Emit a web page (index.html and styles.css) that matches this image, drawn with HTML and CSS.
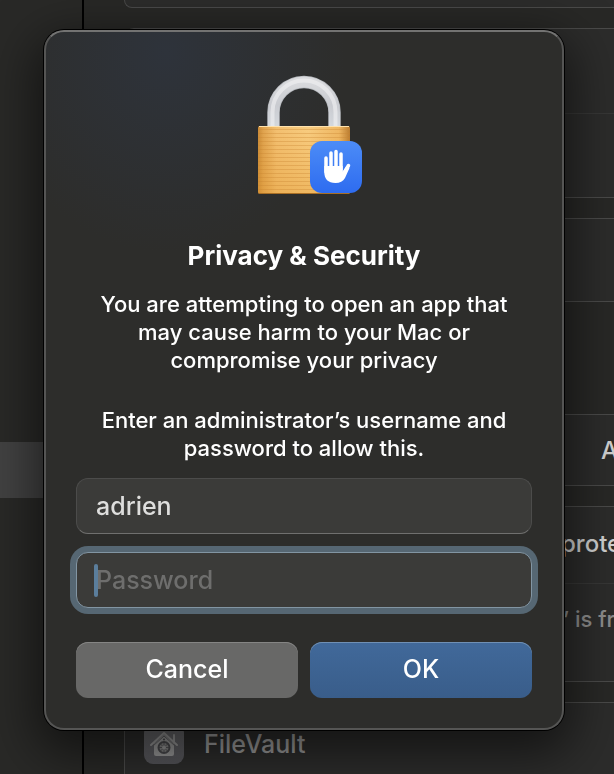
FILE: index.html
```html
<!DOCTYPE html>
<html lang="en">
    <head>
        <meta charset="UTF-8">
        <meta name="viewport" content="width=device-width, initial-scale=1">
        <title>Privacy &amp; Security</title>
        <link rel="stylesheet" href="styles.css">
    </head>
    <body>
        <div class="window">
            <nav class="sidebar">
                <div class="selected"></div>
            </nav>
            <main class="settings">
                <section class="group group-first"></section>
                <section class="group">
                    <div class="row"></div>
                    <div class="row"></div>
                </section>
                <section class="group">
                    <div class="row row-single"></div>
                </section>
                <section class="group group-allow">
                    <div class="row row-short"><span class="value-end">A</span></div>
                </section>
                <section class="group">
                    <div class="row row-medium"><span class="value">prote</span></div>
                    <div class="row row-tall"><span class="note">’ is fr</span></div>
                </section>
                <section class="group group-last">
                    <div class="row row-vault">
                        <svg class="vault-icon" viewBox="0 0 40 40" aria-hidden="true">
                            <defs>
                                <linearGradient id="vault" x1="0" y1="0" x2="0" y2="1">
                                    <stop offset="0" stop-color="#6b6b6d"/>
                                    <stop offset="1" stop-color="#535358"/>
                                </linearGradient>
                            </defs>
                            <rect width="40" height="40" rx="9" fill="url(#vault)"/>
                            <path d="M10 20v10q0 2 2 2h16q2 0 2-2V20L20 11z" fill="#969696"/>
                            <path d="M7 21L20 9l13 12M30 11v7" fill="none" stroke="#969696" stroke-width="2" stroke-linecap="round" stroke-linejoin="round"/>
                            <path d="M9 22L20 12l11 10" fill="none" stroke="#5b5b5d" stroke-width="1"/>
                            <circle cx="20" cy="23.500" r="5.500" fill="#808080" stroke="#48484b" stroke-width="2"/>
                            <path d="M20 18v11M14.500 23.500h11M16 19.500l8 8M24 19.500l-8 8" stroke="#48484b" stroke-width="0.800"/>
                            <circle cx="20" cy="23.500" r="2" fill="#969696"/>
                            <circle cx="20" cy="15.500" r="1" fill="#48484b"/>
                        </svg>
                        <span>FileVault</span>
                    </div>
                </section>
            </main>
        </div>

        <div class="overlay">
            <form class="dialog" role="dialog" aria-labelledby="title">
                <svg class="lock" viewBox="-12 0 124 126" aria-hidden="true">
                    <defs>
                        <linearGradient id="steel" x1="0" y1="0" x2="0" y2="1">
                            <stop offset="0" stop-color="#d9dadd"/>
                            <stop offset="0.5" stop-color="#c9cbd0"/>
                            <stop offset="1" stop-color="#d5d9de"/>
                        </linearGradient>
                        <linearGradient id="brass" x1="0" y1="0" x2="1" y2="0">
                            <stop offset="0" stop-color="#c98a37"/>
                            <stop offset="0.06" stop-color="#e0a450"/>
                            <stop offset="0.2" stop-color="#f3c071"/>
                            <stop offset="0.55" stop-color="#f8cc80"/>
                            <stop offset="0.88" stop-color="#efb864"/>
                            <stop offset="1" stop-color="#b97b30"/>
                        </linearGradient>
                        <linearGradient id="shade" x1="0" y1="0" x2="0" y2="1">
                            <stop offset="0" stop-color="#e29a32" stop-opacity="0"/>
                            <stop offset="1" stop-color="#e29a32" stop-opacity="0.4"/>
                        </linearGradient>
                        <linearGradient id="badge" x1="0" y1="0" x2="0" y2="1">
                            <stop offset="0" stop-color="#4c8cf7"/>
                            <stop offset="1" stop-color="#2e6cf0"/>
                        </linearGradient>
                        <pattern id="brushed" width="92" height="4" patternUnits="userSpaceOnUse">
                            <rect y="1" width="92" height="1" fill="#c98430" opacity="0.35"/>
                        </pattern>
                    </defs>
                    <!-- shackle -->
                    <path d="M19.500 56V40.500a30.500 30.500 0 0 1 61 0V56" fill="none" stroke="#b4b7bc" stroke-width="12.500"/>
                    <path d="M19.500 56V40.500a30.500 30.500 0 0 1 61 0V56" fill="none" stroke="url(#steel)" stroke-width="11"/>
                    <path d="M18.500 54V40a31.500 31.500 0 0 1 63 0V54" fill="none" stroke="#f1f2f4" stroke-width="4" opacity="0.6"/>
                    <!-- body -->
                    <rect x="4" y="54" width="92" height="68" rx="2" fill="url(#brass)"/>
                    <rect x="4" y="54" width="92" height="68" rx="2" fill="url(#shade)"/>
                    <rect x="4" y="57" width="92" height="62" fill="url(#brushed)"/>
                    <path d="M5 54.500h90" stroke="#ffe2ad" stroke-width="1"/>
                    <path d="M5 121.500h90" stroke="#a96f25" stroke-width="1"/>
                    <!-- hand badge -->
                    <rect x="56" y="69" width="52" height="52" rx="12" fill="url(#badge)"/>
                    <g fill="none" stroke="#fff" stroke-linecap="round">
                        <path d="M72 86v14M77 81v16M82 79.500v17M87 82v16" stroke-width="3.500"/>
                        <path d="M94.500 93.500L89 103" stroke-width="3.500"/>
                    </g>
                    <path d="M70.300 94H88.700V99.500L92 94.500l3.500 1.500C94 99 92.500 103 91 106c-2 3.500-5 5-9.500 5C74 111 70.300 107 70.300 100z" fill="#fff"/>
                </svg>
                <h1 id="title">Privacy &amp; Security</h1>
                <p>You are attempting to open an app that may cause harm to your Mac or compromise your privacy</p>
                <p class="prompt">Enter an administrator’s username and password to allow this.</p>
                <input class="field" type="text" name="username" value="adrien" aria-label="Username">
                <div class="password">
                    <input class="field field-active" type="password" name="password" placeholder="Password" aria-label="Password">
                    <span class="caret"></span>
                </div>
                <div class="buttons">
                    <button class="btn" type="button">Cancel</button>
                    <button class="btn btn-primary" type="submit">OK</button>
                </div>
            </form>
        </div>
    </body>
</html>
```

FILE: styles.css
```css
* {
    box-sizing: border-box;
}

body {
    margin: 0;
    height: 100vh;
    overflow: hidden;
    background: #282826;
    color: #fff;
    font-family: Inter, "Liberation Sans", sans-serif;
    font-size: 22px;
    font-weight: 500;
}

/* settings window behind the dialog */
.window {
    display: flex;
    height: 100%;
    overflow: hidden;
}

.sidebar {
    flex: 0 0 84px;
    padding-top: 442px;
    border-right: 2px solid #000;
    background: #292927;
}

.selected {
    height: 56px;
    background: #424242;
}

.settings {
    flex: 1;
    display: flex;
    flex-direction: column;
    gap: 20px;
    min-width: 0;
    padding-left: 40px;
}

.group {
    flex-shrink: 0;
    border: 1px solid #4a4a49;
    border-right: none;
    border-radius: 10px 0 0 10px;
    background: #2c2c2b;
}

.group-first {
    height: 8px;
    border-top: none;
    border-radius: 0 0 0 10px;
}

.group-allow {
    margin-top: 92px;
}

.row {
    display: flex;
    align-items: center;
    height: 84px;
    white-space: nowrap;
    overflow: hidden;
    color: #d0d0d0;
    font-size: 24px;
}

.row + .row {
    border-top: 1px solid #373736;
}

.row-single {
    height: 82px;
}

.row-short {
    height: 70px;
}

.row-medium {
    height: 76px;
    padding-bottom: 4px;
}

.row-tall {
    height: 98px;
    align-items: flex-start;
    padding-top: 22px;
    color: #8c8c8c;
    font-size: 22px;
}

.row-vault {
    gap: 20px;
    height: 82px;
    padding-left: 19px;
    color: #999;
    font-size: 25px;
}

.value {
    padding-left: 436px;
}

.value-end {
    padding-left: 476px;
}

.note {
    padding-left: 438px;
}

.vault-icon {
    width: 40px;
    height: 40px;
}

/* dialog */
.overlay {
    position: fixed;
    inset: 0;
    display: flex;
    justify-content: center;
    align-items: flex-start;
    padding: 30px 50px 44px 44px;
}

.dialog {
    display: flex;
    flex-direction: column;
    align-items: center;
    width: 100%;
    max-width: 520px;
    padding: 40px 30px 30px;
    border: 2px solid #555554;
    border-top-color: #737372;
    border-radius: 20px;
    background: radial-gradient(ellipse 180px 200px at 120px 20px, #2e333b, rgba(46, 51, 59, 0)), #2d2d2b;
    box-shadow: 0 0 0 1px #000, 0 16px 50px 8px rgba(0, 0, 0, 0.55);
}

.lock {
    width: 124px;
    height: 126px;
}

h1 {
    margin: 40px 0 16px;
    font-size: 26px;
    line-height: 36px;
    font-weight: 700;
}

p {
    max-width: 420px;
    margin: 0;
    font-size: 22px;
    line-height: 28px;
    text-align: center;
}

.prompt {
    margin: 32px 0 16px;
}

.field {
    display: block;
    width: 100%;
    height: 56px;
    padding: 0 19px;
    border: 1px solid #4c4c4b;
    border-bottom-color: #70706f;
    border-radius: 12px;
    outline: none;
    background: #3b3b39;
    color: #dededd;
    font: inherit;
    font-size: 25px;
}

.field::placeholder {
    color: #6e6e6d;
    opacity: 1;
}

.password {
    position: relative;
    width: 100%;
    margin: 18px 0 34px;
}

.field-active {
    border-color: #8295a3;
    box-shadow: 0 0 0 6px #566773;
}

.caret {
    position: absolute;
    top: 12px;
    left: 18px;
    width: 4px;
    height: 33px;
    border-radius: 2px;
    background: #5b7e9c;
}

.buttons {
    display: grid;
    grid-template-columns: 1fr 1fr;
    gap: 12px;
    width: 100%;
}

.btn {
    height: 56px;
    padding: 0 0 2px;
    border: none;
    border-radius: 12px;
    background: #686867;
    box-shadow: inset 0 1px 0 #858584;
    color: #fff;
    font: inherit;
    font-size: 25px;
}

.btn-primary {
    background: linear-gradient(#41699a, #395d8a);
    box-shadow: inset 0 1px 0 #7090b4;
}
```
